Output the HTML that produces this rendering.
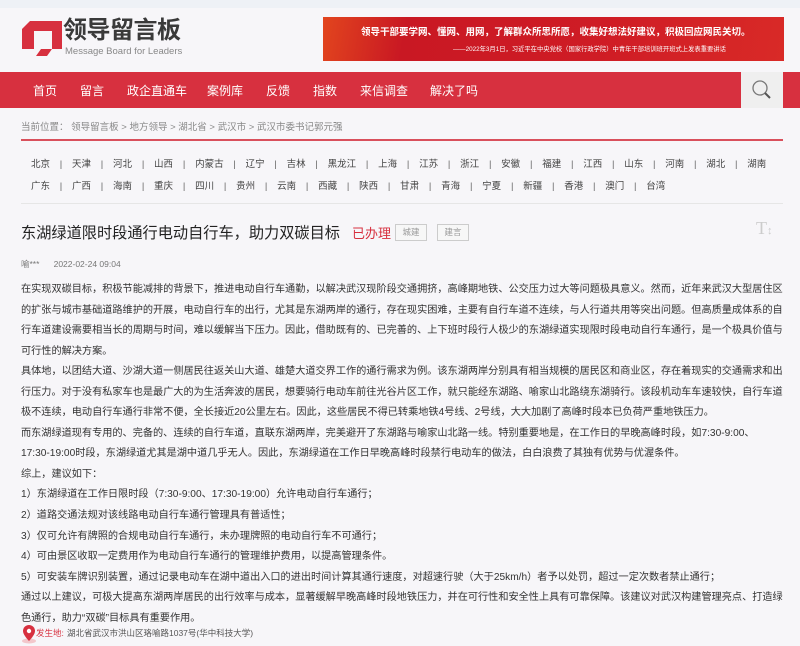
<!DOCTYPE html>
<html><head><meta charset="utf-8">
<style>
*{margin:0;padding:0;box-sizing:border-box}
body{width:800px;height:646px;overflow:hidden;background:#f7f6f9;font-family:"Liberation Sans","Noto Sans CJK SC",sans-serif;color:#333;position:relative}
.abs{position:absolute}
.top{left:0;top:0;width:800px;height:8px;background:#eef1f6}
.nav{left:0;top:72px;width:800px;height:36px;background:#d7303f}
.nav span{position:absolute;top:10px;color:#fff;font-size:12px;white-space:nowrap}
.search{left:741px;top:72px;width:42px;height:36px;background:#efefef}
.prov{font-size:9.5px;color:#444;white-space:nowrap}
.prov i{font-style:normal;display:inline-block;width:22px;text-align:center;color:#666}
.body{left:21px;top:280px;font-size:10.17px;line-height:20.55px;color:#333;white-space:nowrap}
.tag{border:1px solid #ccc;color:#999;font-size:8.5px;text-align:center;line-height:15px;height:17px;width:32px;background:#f7f7f7}
</style></head><body>
<div class="abs top"></div>
<svg class="abs" style="left:22px;top:21px" width="40" height="35" viewBox="0 0 40 35">
<path d="M8 0H40V28H30L25 35H14L19 28H30V10H12L12 28H0V8Z" fill="#d7303f"/>
</svg>
<div class="abs" style="left:63px;top:17px;font-size:24px;font-weight:bold;color:#3a3a3a;letter-spacing:-0.5px;white-space:nowrap;line-height:28px">领导留言板</div>
<div class="abs" style="left:65px;top:46px;font-size:9.5px;color:#888;white-space:nowrap;line-height:11px">Message Board for Leaders</div>
<div class="abs" style="left:323px;top:17px;width:461px;height:44px;background:linear-gradient(100deg,#e2451e 0%,#c91823 18%,#cf1c25 60%,#d92a27 100%)">
<div class="abs" style="left:38px;top:7px;font-size:9.5px;font-weight:bold;color:#fff;white-space:nowrap">领导干部要学网、懂网、用网，了解群众所思所愿，收集好想法好建议，积极回应网民关切。</div>
<div class="abs" style="left:130px;top:27px;font-size:6.3px;color:#fff;white-space:nowrap">——2022年3月1日，习近平在中央党校（国家行政学院）中青年干部培训班开班式上发表重要讲话</div>
</div>
<div class="abs nav">
<span style="left:33px">首页</span><span style="left:80px">留言</span><span style="left:127px">政企直通车</span><span style="left:207px">案例库</span><span style="left:266px">反馈</span><span style="left:313px">指数</span><span style="left:360px">来信调查</span><span style="left:430px">解决了吗</span>
</div>
<div class="abs search">
<svg width="42" height="36" viewBox="0 0 42 36"><circle cx="19" cy="16" r="7" fill="none" stroke="#777" stroke-width="1.3"/><line x1="24" y1="21" x2="29" y2="26" stroke="#555" stroke-width="2"/></svg>
</div>
<div class="abs" style="left:21px;top:119px;font-size:9.5px;color:#888;white-space:nowrap">当前位置： 领导留言板 &gt; 地方领导 &gt; 湖北省 &gt; 武汉市 &gt; 武汉市委书记郭元强</div>
<div class="abs" style="left:21px;top:139px;width:762px;height:2px;background:#d9505c"></div>
<div class="abs prov" style="left:31px;top:156px">北京<i>|</i>天津<i>|</i>河北<i>|</i>山西<i>|</i>内蒙古<i>|</i>辽宁<i>|</i>吉林<i>|</i>黑龙江<i>|</i>上海<i>|</i>江苏<i>|</i>浙江<i>|</i>安徽<i>|</i>福建<i>|</i>江西<i>|</i>山东<i>|</i>河南<i>|</i>湖北<i>|</i>湖南</div>
<div class="abs prov" style="left:31px;top:178px">广东<i>|</i>广西<i>|</i>海南<i>|</i>重庆<i>|</i>四川<i>|</i>贵州<i>|</i>云南<i>|</i>西藏<i>|</i>陕西<i>|</i>甘肃<i>|</i>青海<i>|</i>宁夏<i>|</i>新疆<i>|</i>香港<i>|</i>澳门<i>|</i>台湾</div>
<div class="abs" style="left:21px;top:203px;width:762px;height:1px;background:#e6e6e6"></div>
<div class="abs" style="left:21px;top:221px;font-size:15.2px;color:#222;white-space:nowrap">东湖绿道限时段通行电动自行车，助力双碳目标</div>
<div class="abs" style="left:352px;top:223px;font-size:13px;color:#d7303f;white-space:nowrap">已办理</div>
<div class="abs tag" style="left:395px;top:224px">城建</div>
<div class="abs tag" style="left:437px;top:224px">建言</div>
<div class="abs" style="left:756px;top:218px;font-size:18px;color:#ccc;font-family:'Liberation Serif',serif">T<span style="font-size:11px">↕</span></div>
<div class="abs" style="left:21px;top:258px;font-size:8.5px;color:#777;white-space:nowrap">喻***&nbsp;&nbsp;&nbsp;&nbsp;&nbsp;&nbsp;2022-02-24 09:04</div>
<div class="abs body">
在实现双碳目标，积极节能减排的背景下，推进电动自行车通勤，以解决武汉现阶段交通拥挤，高峰期地铁、公交压力过大等问题极具意义。然而，近年来武汉大型居住区<br>
的扩张与城市基础道路维护的开展，电动自行车的出行，尤其是东湖两岸的通行，存在现实困难，主要有自行车道不连续，与人行道共用等突出问题。但高质量成体系的自<br>
行车道建设需要相当长的周期与时间，难以缓解当下压力。因此，借助既有的、已完善的、上下班时段行人极少的东湖绿道实现限时段电动自行车通行，是一个极具价值与<br>
可行性的解决方案。<br>
具体地，以团结大道、沙湖大道一侧居民往返关山大道、雄楚大道交界工作的通行需求为例。该东湖两岸分别具有相当规模的居民区和商业区，存在着现实的交通需求和出<br>
行压力。对于没有私家车也是最广大的为生活奔波的居民，想要骑行电动车前往光谷片区工作，就只能经东湖路、喻家山北路绕东湖骑行。该段机动车车速较快，自行车道<br>
极不连续，电动自行车通行非常不便，全长接近20公里左右。因此，这些居民不得已转乘地铁4号线、2号线，大大加剧了高峰时段本已负荷严重地铁压力。<br>
而东湖绿道现有专用的、完备的、连续的自行车道，直联东湖两岸，完美避开了东湖路与喻家山北路一线。特别重要地是，在工作日的早晚高峰时段，如7:30-9:00、<br>
17:30-19:00时段，东湖绿道尤其是湖中道几乎无人。因此，东湖绿道在工作日早晚高峰时段禁行电动车的做法，白白浪费了其独有优势与优渥条件。<br>
综上，建议如下：<br>
1）东湖绿道在工作日限时段（7:30-9:00、17:30-19:00）允许电动自行车通行；<br>
2）道路交通法规对该线路电动自行车通行管理具有普适性；<br>
3）仅可允许有牌照的合规电动自行车通行，未办理牌照的电动自行车不可通行；<br>
4）可由景区收取一定费用作为电动自行车通行的管理维护费用，以提高管理条件。<br>
5）可安装车牌识别装置，通过记录电动车在湖中道出入口的进出时间计算其通行速度，对超速行驶（大于25km/h）者予以处罚，超过一定次数者禁止通行；<br>
通过以上建议，可极大提高东湖两岸居民的出行效率与成本，显著缓解早晚高峰时段地铁压力，并在可行性和安全性上具有可靠保障。该建议对武汉构建管理亮点、打造绿<br>
色通行，助力“双碳”目标具有重要作用。
</div>
<svg class="abs" style="left:21px;top:624px" width="16" height="20" viewBox="0 0 16 20"><ellipse cx="8" cy="17" rx="7" ry="2.5" fill="#f3c7cb"/><path d="M8 1a6 6 0 0 0-6 6c0 4 6 10 6 10s6-6 6-10a6 6 0 0 0-6-6z" fill="#d7303f"/><circle cx="8" cy="7" r="2.2" fill="#fff"/></svg>
<div class="abs" style="left:36px;top:627px;font-size:8.5px;color:#d7303f;white-space:nowrap">发生地:</div>
<div class="abs" style="left:67px;top:627px;font-size:8.5px;color:#555;white-space:nowrap">湖北省武汉市洪山区珞喻路1037号(华中科技大学)</div>
</body></html>
